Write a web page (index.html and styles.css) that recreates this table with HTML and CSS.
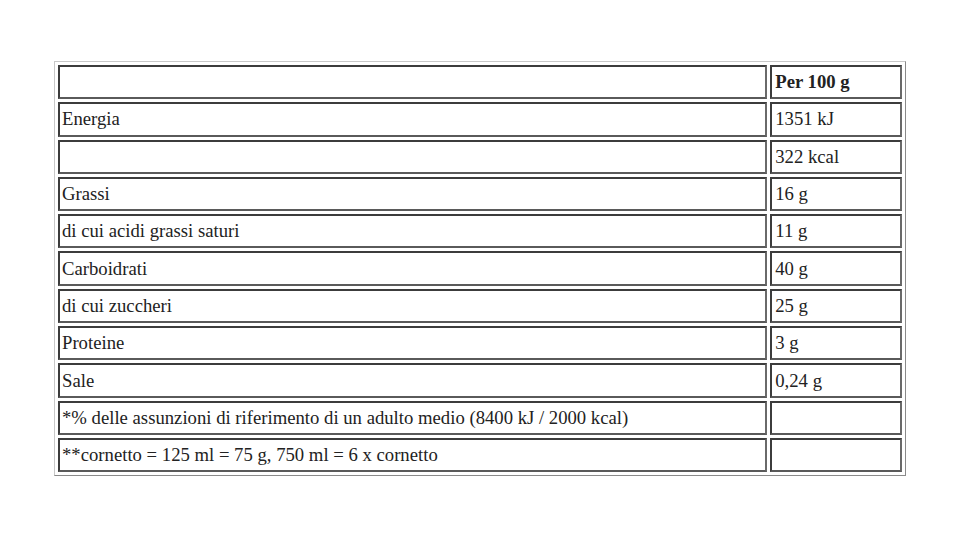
FILE: index.html
```html
<!DOCTYPE html>
<html lang="it">
<head>
<meta charset="utf-8">
<title>Valori nutrizionali</title>
<link rel="stylesheet" href="styles.css">
</head>
<body>
<main class="page">
<table class="nutri">
<tr><td class="label"></td><td class="value head">Per 100 g</td></tr>
<tr><td class="label">Energia</td><td class="value">1351 kJ</td></tr>
<tr><td class="label"></td><td class="value">322 kcal</td></tr>
<tr><td class="label">Grassi</td><td class="value">16 g</td></tr>
<tr><td class="label">di cui acidi grassi saturi</td><td class="value">11 g</td></tr>
<tr><td class="label">Carboidrati</td><td class="value">40 g</td></tr>
<tr><td class="label">di cui zuccheri</td><td class="value">25 g</td></tr>
<tr><td class="label">Proteine</td><td class="value">3 g</td></tr>
<tr><td class="label">Sale</td><td class="value">0,24 g</td></tr>
<tr><td class="label">*% delle assunzioni di riferimento di un adulto medio (8400 kJ / 2000 kcal)</td><td class="value"></td></tr>
<tr><td class="label">**cornetto = 125 ml = 75 g, 750 ml = 6 x cornetto</td><td class="value"></td></tr>
</table>
</main>
</body>
</html>
```
FILE: styles.css
```css
html, body {
  margin: 0;
  padding: 0;
  background: #ffffff;
}

.page {
  padding: 61px 0 0 54px;
}

.nutri {
  width: 852px;
  border-collapse: separate;
  border-spacing: 3px;
  border: 1px solid;
  border-color: #c8c8c8 #8a8a8a #8a8a8a #c8c8c8;
  font-family: "Liberation Serif", "Times New Roman", serif;
  font-size: 18.7px;
  color: #222222;
}

.nutri td {
  box-sizing: border-box;
  height: 34.3px;
  padding: 0 2px;
  border: 2px solid;
  border-color: #3c3c3c #6a6a6a #5a5a5a #3c3c3c;
  vertical-align: middle;
  text-align: left;
  white-space: nowrap;
}

.nutri .label {
  width: 710px;
}

.nutri .value {
  width: 132px;
  padding-left: 3px;
}

.nutri .head {
  font-weight: bold;
}
```
